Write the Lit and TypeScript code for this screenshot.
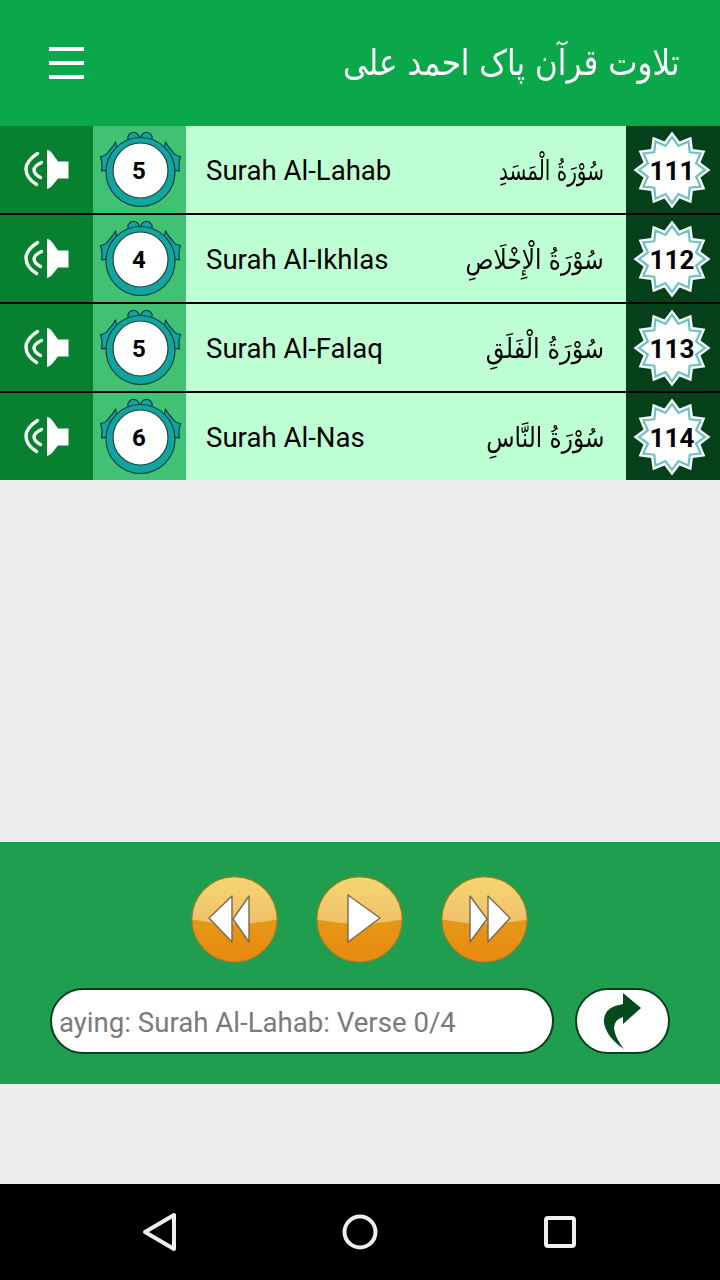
import { LitElement, html, css, svg } from "lit";
import { customElement } from "lit/decorators.js";

const rows = [
  { no: 111, verses: 5, en: "Surah Al-Lahab", ar: "سُوْرَةُ الْمَسَدِ", sx: 0.74 },
  { no: 112, verses: 4, en: "Surah Al-Ikhlas", ar: "سُوْرَةُ الْإِخْلَاصِ", sx: 0.86 },
  { no: 113, verses: 5, en: "Surah Al-Falaq", ar: "سُوْرَةُ الْفَلَقِ", sx: 0.89 },
  { no: 114, verses: 6, en: "Surah Al-Nas", ar: "سُوْرَةُ النَّاسِ", sx: 0.86 },
];

function starPoints(r1: number, r2: number, n = 12) {
  const p: string[] = [];
  for (let i = 0; i < n * 2; i++) {
    const a = (Math.PI * i) / n - Math.PI / 2;
    const r = i % 2 ? r2 : r1;
    p.push(`${(40 + r * Math.cos(a)).toFixed(1)},${(40 + r * Math.sin(a)).toFixed(1)}`);
  }
  return p.join(" ");
}

const speaker = html`<svg width="48" height="42" viewBox="0 0 48 42">
  <path d="M24 1 Q27 1 29 4 L35 12.5 L45.5 12.5 L45.5 29.5 L35 29.5 L29 37 Q26 40 24 40Z" fill="#fff"/>
  <path d="M14.5 4.5 Q3 12 3 20 Q3 29 13.5 35.5" fill="none" stroke="#f4fff6" stroke-width="3.4" stroke-linecap="round"/>
  <path d="M18.5 13.5 Q11 17 11 21 Q11 25 17.5 28.5" fill="none" stroke="#f4fff6" stroke-width="3.4" stroke-linecap="round"/>
</svg>`;

const fin = svg`<path d="M16.5 11 Q17 17 22 22 L13 42 Q9 38 2.5 40 Q4 33 1.5 25.5 Q7 25 10 20 Q14 16 16.5 11Z" fill="#12a5a0" stroke="#06413f" stroke-width="1.2" stroke-linejoin="round"/>`;

const medal = html`<svg width="82" height="78" viewBox="0 0 82 78">
  <circle cx="34.5" cy="7" r="5.6" fill="#12a5a0" stroke="#06413f" stroke-width="1.2"/>
  <circle cx="47.5" cy="7" r="5.6" fill="#12a5a0" stroke="#06413f" stroke-width="1.2"/>
  ${fin}
  <g transform="matrix(-1 0 0 1 83 0)">${fin}</g>
  <circle cx="41.5" cy="41" r="34.5" fill="#12a5a0" stroke="#06413f" stroke-width="1.2"/>
  <circle cx="41.5" cy="39.5" r="27.5" fill="#fff" stroke="#24403c" stroke-width="1.2"/>
</svg>`;

const star = html`<svg width="80" height="80" viewBox="0 0 80 80">
  <polygon class="soft" points="${starPoints(38.5, 29.5)}" fill="#fff"/>
  <polygon class="softer" points="${starPoints(33, 25)}" fill="#fff" stroke="#6fc2bd" stroke-width="2.2"/>
</svg>`;

const tri = (pts: string) => svg`<polygon points="${pts}" fill="#fff" stroke="#7b6a4e" stroke-width="1.4" stroke-linejoin="round"/>`;

function roundButton(content: unknown, id: string) {
  return html`<svg width="87" height="87" viewBox="0 0 87 87">
    <defs>
      <linearGradient id="top${id}" x1="0" y1="0" x2="0" y2="1"><stop offset="0" stop-color="#f7d572"/><stop offset="1" stop-color="#eec169"/></linearGradient>
      <linearGradient id="bot${id}" x1="0" y1="0" x2="0" y2="1"><stop offset="0" stop-color="#e3a51d"/><stop offset="1" stop-color="#e88a10"/></linearGradient>
    </defs>
    <circle cx="43.5" cy="43.5" r="42.7" fill="url(#bot${id})" stroke="#9a7d2c" stroke-width="1.2"/>
    <path d="M1.4 43.5 A42.1 42.1 0 0 1 85.6 43.5 Q43.5 52 1.4 43.5Z" fill="url(#top${id})"/>
    ${content}
  </svg>`;
}

@customElement("app-root")
export class AppRoot extends LitElement {
  static styles = css`
    :host { display: flex; flex-direction: column; width: 720px; height: 1280px; background: #eeeeee; font-family: Roboto, "Liberation Sans", sans-serif; overflow: hidden; }
    header { height: 126px; flex: none; background: #0aa84a; display: flex; align-items: center; justify-content: space-between; padding: 0 40px 0 49px; box-sizing: border-box; }
    .menu { display: flex; flex-direction: column; gap: 10px; width: 35px; }
    .menu i { display: block; height: 4px; background: #fff; }
    .title { color: #fff; font: 36px/1 "DejaVu Sans", sans-serif; direction: rtl; white-space: nowrap; transform: scaleX(0.862); transform-origin: right center; }
    .list { flex: none; display: flex; flex-direction: column; gap: 2px; background: #000; }
    .row { height: 87px; display: grid; grid-template-columns: 93px 93px 440px 94px; }
    .c { display: flex; align-items: center; justify-content: center; position: relative; }
    .spk { background: #07802f; }
    .ver { background: #41c173; }
    .name { background: #bfffd4; justify-content: space-between; padding: 2px 22px 0 20px; font-size: 27.6px; color: #000; }
    .ar { font: 27px/1 "DejaVu Sans", sans-serif; direction: rtl; white-space: nowrap; color: #000; transform-origin: right center; }
    .no { background: #044019; padding-right: 2px; box-sizing: border-box; }
    .num { position: absolute; inset: 0; display: flex; align-items: center; justify-content: center; font-weight: 700; color: #000; padding-top: 2px; }
    .num.v { font-size: 24px; padding-right: 1px; }
    .num.n { font-size: 26px; padding-right: 2px; }
    .soft { filter: blur(0.7px); }
    .softer { filter: blur(0.4px); }
    .spacer { flex: none; height: 362px; }
    .player { flex: none; height: 242px; background: #1f9e4f; box-sizing: border-box; padding-top: 34px; display: flex; flex-direction: column; align-items: center; }
    .controls { display: flex; gap: 38px; height: 87px; margin-left: -2px; }
    .status { display: flex; gap: 21px; margin-top: 25px; width: 620px; box-sizing: border-box; }
    .field { width: 504px; height: 66px; box-sizing: border-box; border: 2px solid #053f1b; border-radius: 33px; background: #fff; color: #7a7a7a; font-size: 27.6px; display: flex; align-items: center; overflow: hidden; padding: 2px 0 0 7px; white-space: nowrap; }
    .share { width: 95px; height: 66px; box-sizing: border-box; border: 2px solid #053f1b; border-radius: 33px; background: #fff; display: flex; align-items: center; justify-content: center; }
    .share svg { filter: blur(0.5px); }
    .gap { flex: 1; }
    nav { flex: none; height: 96px; background: #000; display: grid; grid-template-columns: repeat(3, 200px); justify-content: center; align-items: center; justify-items: center; }
    nav svg { display: block; }
  `;

  render() {
    return html`
      <header>
        <div class="menu"><i></i><i></i><i></i></div>
        <div class="title">تلاوت قرآن پاک احمد علی</div>
      </header>
      <div class="list">
        ${rows.map((r) => html`
          <div class="row">
            <div class="c spk">${speaker}</div>
            <div class="c ver">${medal}<span class="num v">${r.verses}</span></div>
            <div class="c name"><span>${r.en}</span><span class="ar" style="transform: scaleX(${r.sx})">${r.ar}</span></div>
            <div class="c no">${star}<span class="num n">${r.no}</span></div>
          </div>`)}
      </div>
      <div class="spacer"></div>
      <div class="player">
        <div class="controls">
          ${roundButton(svg`${tri("41,20 41,66 18,42")}${tri("58,20 58,66 42,43")}`, "a")}
          ${roundButton(svg`${tri("32,19 32,66 64,42")}`, "b")}
          ${roundButton(svg`${tri("29,20 29,66 46,43")}${tri("47,20 47,66 69,42")}`, "c")}
        </div>
        <div class="status">
          <div class="field">aying: Surah Al-Lahab: Verse 0/4</div>
          <div class="share">
            <svg width="44" height="62" viewBox="0 0 44 62">
              <path d="M22 3 L40 18 L22 34 L22 27 Q13 30 13 38 Q14 48 23 59 Q6 48 3 33 Q2 20 14 16 L22 14Z" fill="#054a1c"/>
            </svg>
          </div>
        </div>
      </div>
      <div class="gap"></div>
      <nav>
        <svg width="36" height="40" viewBox="0 0 36 40"><path d="M32 3 L32 37 L3 20Z" fill="none" stroke="#eee" stroke-width="4" stroke-linejoin="round"/></svg>
        <svg width="36" height="36" viewBox="0 0 36 36"><circle cx="18" cy="18" r="15.5" fill="none" stroke="#eee" stroke-width="4"/></svg>
        <svg width="32" height="32" viewBox="0 0 32 32"><rect x="2" y="2" width="28" height="28" rx="2" fill="none" stroke="#eee" stroke-width="4"/></svg>
      </nav>
    `;
  }
}
